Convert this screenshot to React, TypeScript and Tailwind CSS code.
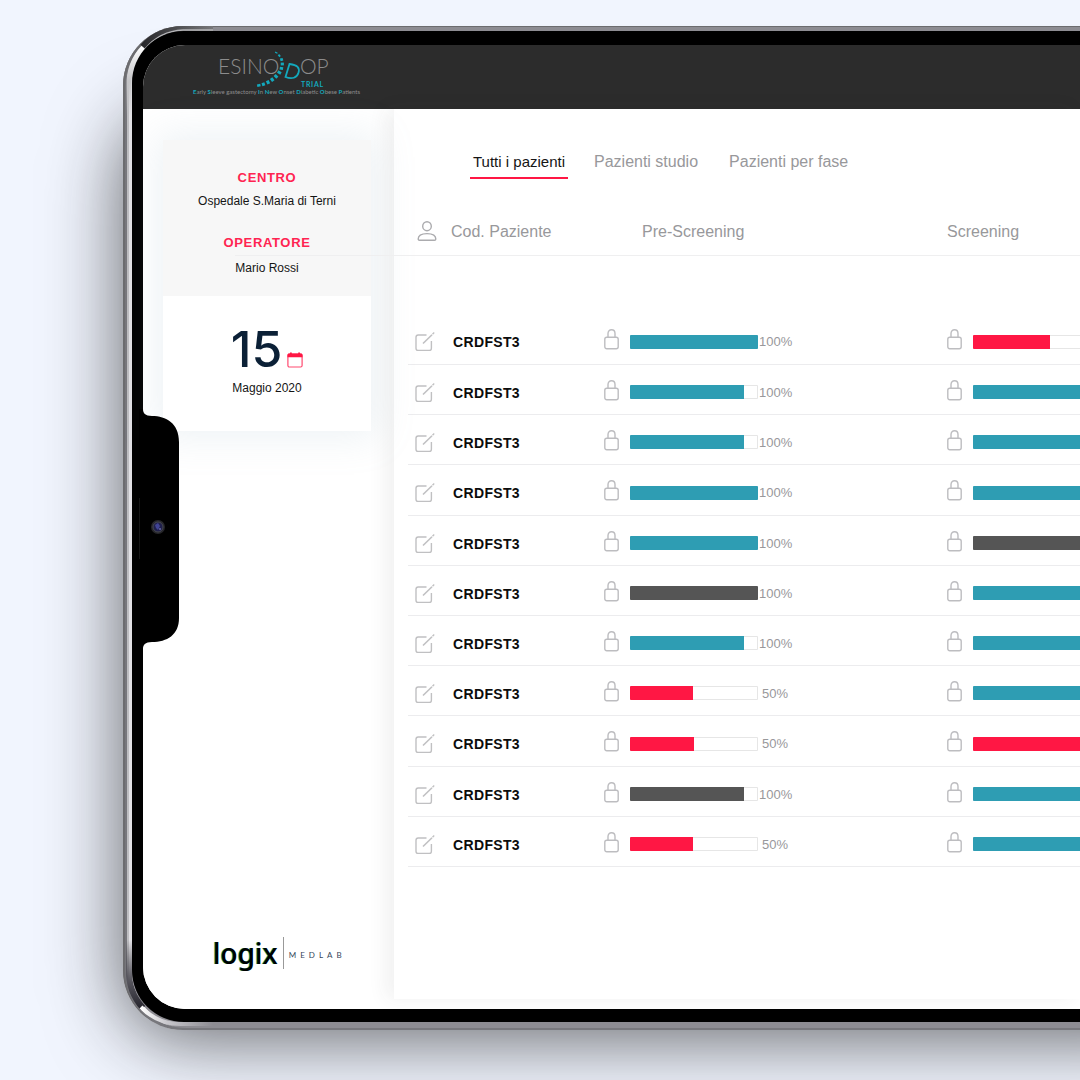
import React from "react";

type Tone = "teal" | "red" | "gray";
type Phase = { value: number; label?: string; tone: Tone };
type Patient = { code: string; pre: Phase; screening: Phase };

const tones: Record<Tone, string> = {
  teal: "bg-[#2e9db3]",
  red: "bg-[#ff1744]",
  gray: "bg-[#555555]",
};

const phase = (value: number, tone: Tone, label?: string): Phase => ({ value, tone, label });

const patients: Patient[] = [
  { code: "CRDFST3", pre: phase(100, "teal", "100%"), screening: phase(60, "red") },
  { code: "CRDFST3", pre: phase(89, "teal", "100%"), screening: phase(100, "teal") },
  { code: "CRDFST3", pre: phase(89, "teal", "100%"), screening: phase(100, "teal") },
  { code: "CRDFST3", pre: phase(100, "teal", "100%"), screening: phase(100, "teal") },
  { code: "CRDFST3", pre: phase(100, "teal", "100%"), screening: phase(100, "gray") },
  { code: "CRDFST3", pre: phase(100, "gray", "100%"), screening: phase(100, "teal") },
  { code: "CRDFST3", pre: phase(89, "teal", "100%"), screening: phase(100, "teal") },
  { code: "CRDFST3", pre: phase(49, "red", "50%"), screening: phase(100, "teal") },
  { code: "CRDFST3", pre: phase(50, "red", "50%"), screening: phase(100, "red") },
  { code: "CRDFST3", pre: phase(89, "gray", "100%"), screening: phase(100, "teal") },
  { code: "CRDFST3", pre: phase(49, "red", "50%"), screening: phase(100, "teal") },
];

/* Beads of the logo's arc: centre x, centre y, width, height, rotation. */
const beads = [
  [20.3, 1.7, 2.6, 1.2, 25],
  [23.3, 4.6, 2.6, 1.8, 50],
  [25.6, 8.6, 2.8, 2.8, 75],
  [26.3, 13, 2.8, 3.2, 90],
  [25.4, 17.4, 2.8, 3.4, 100],
  [23.3, 21.5, 2.8, 3.8, 120],
  [20, 25.4, 3, 3.8, 135],
  [16.2, 28.6, 3, 3.8, 145],
  [12, 31.2, 3, 3.6, 155],
  [7.4, 33.2, 3, 3.2, 162],
  [2.8, 34.4, 3.4, 2.4, 168],
];

function UserIcon() {
  return (
    <svg width="20" height="21" viewBox="0 0 20 21" fill="none" stroke="#ababae" strokeWidth="1.4" aria-hidden="true">
      <ellipse cx="10" cy="5.2" rx="4.3" ry="4.5" />
      <path d="M1.2 18c0-3.600 3.200-5.400 8.800-5.400s8.800 1.800 8.800 5.400c0 .8-.5 1.200-1.300 1.200h-15c-.8 0-1.300-.4-1.300-1.200z" />
    </svg>
  );
}

function EditIcon() {
  return (
    <svg width="20" height="20" viewBox="0 0 20 20" fill="none" stroke="#c0c0c2" strokeWidth="1.4" aria-hidden="true">
      <path d="M11.500 3H3.200C1.800 3 1 3.800 1 5.200v11c0 1.400.8 2.200 2.200 2.200h11c1.400 0 2.200-.8 2.200-2.200V9" />
      <path d="M8 11.500 17 2.700" strokeWidth="1.600" />
      <path d="M17.500 2.200 19.200.6" />
    </svg>
  );
}

function LockIcon() {
  return (
    <svg width="15" height="21" viewBox="0 0 15 21" fill="none" stroke="#bdbdc0" strokeWidth="1.4" aria-hidden="true">
      <rect x=".8" y="8.2" width="13.400" height="11.600" rx="2" />
      <path d="M4 8V4.500C4 2.200 5.500.8 7.500.8S11 2.200 11 4.500V8" />
    </svg>
  );
}

function CalendarIcon() {
  return (
    <svg width="16" height="16" viewBox="0 0 16 16" fill="none" aria-hidden="true">
      <rect x=".9" y="2" width="14.200" height="13" rx="1.500" stroke="#ff4a70" strokeWidth="1.200" />
      <path d="M.5 5.200V3c0-.9.700-1.500 1.500-1.500h1V.4h1.800v1.100h6.400V.4H13v1.100h1c.9 0 1.500.6 1.500 1.500v2.200z" fill="#ff1744" />
    </svg>
  );
}

function TrialLogo() {
  return (
    <a href="#" aria-label="Esinodop Trial" className="relative block w-[163px] text-[#8c8c8c]">
      <span className="flex pt-[9px] pl-[25px] font-[Lato] text-[21px] leading-6 font-light">
        <span className="w-[82px]">ESINO</span>
        <span>OP</span>
      </span>
      <svg className="absolute top-[6px] left-[63px]" width="50" height="40" viewBox="0 0 50 40" fill="none" aria-hidden="true">
        {beads.map(([x, y, w, h, r]) => (
          <rect key={x} x={x - w / 2} y={y - h / 2} width={w} height={h} transform={`rotate(${r} ${x} ${y})`} fill="#13a9bd" />
        ))}
        <path d="M33.500 13 29.500 26c6.500 2.600 11.500.8 13-4.200S41.500 14 33.500 13z" stroke="#13a9bd" strokeWidth="1.800" />
      </svg>
      <span className="block pt-[2px] pl-[108px] font-[Lato] text-[7px] leading-2 font-bold tracking-widest text-[#13a9bd]">TRIAL</span>
      <span className="block font-[Lato] text-[6px] leading-2 whitespace-nowrap [&>b]:text-[#13a9bd]">
        <b>E</b>arly <b>S</b>leeve gastectomy <b>I</b>n <b>N</b>ew <b>O</b>nset <b>D</b>iabetic <b>O</b>bese <b>P</b>atients
      </span>
    </a>
  );
}

function LogixLogo() {
  return (
    <div className="flex items-center gap-[5px] pl-[70px]">
      <span className="font-['Noto_Sans'] text-[28px] leading-8 font-medium text-black [text-shadow:-1px_0_0_#0b8f5b]">logix</span>
      <span className="h-8 w-px bg-[#999999]" />
      <span className="pt-1 font-[Lato] text-[8px] leading-3 tracking-[4px] whitespace-nowrap text-[#34465a]">MEDLAB</span>
    </div>
  );
}

function PhaseCell({ data, name }: { data: Phase; name: string }) {
  return (
    <div className="flex items-center pt-[6px]">
      <button type="button" aria-label={`Blocca ${name}`} className="mr-[11px] shrink-0 pb-1">
        <LockIcon />
      </button>
      <div
        role="progressbar"
        aria-label={name}
        aria-valuenow={data.value}
        className="h-[14px] w-32 shrink-0 overflow-hidden rounded-[1px] bg-white shadow-[inset_0_0_0_1px_#e6e6e6]"
      >
        <div className={`h-full ${tones[data.tone]}`} style={{ width: `${data.value}%` }} />
      </div>
      {data.label && (
        <span className={`pt-px text-[13px] leading-4 text-[#98989b] ${data.label === "50%" ? "pl-1" : "pl-px"}`}>{data.label}</span>
      )}
    </div>
  );
}

function Notch() {
  return (
    <svg className="absolute top-[364px] left-[-4px] z-20" width="41" height="240" viewBox="0 0 41 240" fill="none" aria-hidden="true">
      <path d="M0 0h4c0 4 2 7 9 7 14 0 27 7 27 26v176c0 17-12 24-27 24-7 0-9 3-9 7H0z" fill="#000" />
      <path d="M.5 89v61" stroke="#151515" />
      <circle cx="19" cy="118" r="7" fill="#26262a" />
      <circle cx="19" cy="118" r="5" fill="#20204d" stroke="#45474f" />
      <path d="m16 116 3-2 2 3-2 4-2-2z" fill="#414494" />
      <circle cx="21" cy="120" r="1" fill="#6468a8" />
    </svg>
  );
}

function FrameShine() {
  return (
    <div className="absolute inset-0 overflow-hidden rounded-l-[60px]">
      <svg className="absolute top-0 left-0" width="90" height="90" viewBox="0 0 90 90" fill="none" aria-hidden="true">
        <defs>
          <linearGradient id="topEdge" gradientUnits="userSpaceOnUse" x1="20" y1="0" x2="90" y2="0">
            <stop stopColor="#28282b" />
            <stop offset="1" stopColor="#77777a" />
          </linearGradient>
          <linearGradient id="topGlow" gradientUnits="userSpaceOnUse" x1="0" y1="20" x2="0" y2="90">
            <stop stopColor="#ffffff" />
            <stop offset=".5" stopColor="#c4c4c7" />
            <stop offset="1" stopColor="#c4c4c7" stopOpacity="0" />
          </linearGradient>
        </defs>
        <path d="M6 90V60A54 54 0 0 1 21 21" stroke="url(#topGlow)" strokeWidth="5" />
        <path d="M20 21A55 55 0 0 1 60 3H90" stroke="url(#topEdge)" strokeWidth="7" />
        <path d="M22 23A53 53 0 0 1 60 4H90" stroke="#b4b4b7" strokeWidth="1.500" />
      </svg>
      <svg className="absolute bottom-0 left-0" width="90" height="90" viewBox="0 0 90 90" fill="none" aria-hidden="true">
        <defs>
          <linearGradient id="lowEdge" gradientUnits="userSpaceOnUse" x1="0" y1="0" x2="0" y2="70">
            <stop stopColor="#35343c" stopOpacity="0" />
            <stop offset=".6" stopColor="#55545c" />
            <stop offset="1" stopColor="#24232b" />
          </linearGradient>
          <linearGradient id="lowGlow" gradientUnits="userSpaceOnUse" x1="18" y1="0" x2="90" y2="0">
            <stop stopColor="#ffffff" />
            <stop offset=".35" stopColor="#c9c8cd" />
            <stop offset="1" stopColor="#8d8c92" />
          </linearGradient>
        </defs>
        <path d="M6 0V30A54 54 0 0 0 20 68" stroke="url(#lowEdge)" strokeWidth="6" />
        <path d="M18 67A55 55 0 0 0 60 84H90" stroke="url(#lowGlow)" strokeWidth="4" />
      </svg>
    </div>
  );
}

export default function App() {
  return (
    <div className="min-h-screen overflow-hidden bg-[#f1f5fe] pt-[26px] pb-[51px] pl-[123px] font-['Liberation_Sans',sans-serif]">
      <div className="relative -mr-20">
        <div className="absolute top-20 right-0 bottom-0 left-0 rounded-l-[60px] shadow-[0_8px_76px_rgba(20,20,22,0.65)]" />
        <div className="relative rounded-l-[60px] bg-[#8d8c92] pt-[5px] pr-20 pb-2 pl-[9px] shadow-[inset_2px_1px_0_#6c6c6f,inset_4px_-2px_0_#77777c,inset_6px_0_0_#bebec1,inset_9px_0_0_#e2e1e5]">
          <FrameShine />
          <div className="relative -mr-20 rounded-l-[52px] bg-black pt-[14px] pr-20 pb-[13px] pl-[11px]">
            <div className="relative rounded-l-[42px] bg-[#fcfcfc]">
              <Notch />
              <header className="h-16 rounded-tl-[42px] bg-[#2c2c2c] pl-[50px]">
                <TrialLogo />
              </header>

              <div className="flex rounded-bl-[42px] bg-white">
                <aside className="flex w-[251px] shrink-0 flex-col justify-between pt-[31px] pb-10">
                  <section className="relative z-10 ml-5 w-52 text-center text-[12px] leading-4 text-[#151515] shadow-[0_0_36px_6px_rgba(150,175,195,0.17)]">
                    <div className="bg-[#f7f7f7] px-2 pt-[30px] pb-5">
                      <h2 className="text-[13px] font-bold tracking-wider text-[#ff2451]">CENTRO</h2>
                      <p className="mt-[7px]">Ospedale S.Maria di Terni</p>
                      <h2 className="mt-[26px] text-[13px] font-bold tracking-wider text-[#ff2451]">OPERATORE</h2>
                      <p className="mt-[9px]">Mario Rossi</p>
                    </div>
                    <div className="bg-white pt-7 pb-[35px]">
                      <div className="flex items-end justify-center gap-[5px]">
                        <span className="font-[Inter] text-[50px] leading-[51px] font-medium text-[#0b2036]">15</span>
                        <button type="button" aria-label="Apri calendario" className="mb-[7px]">
                          <CalendarIcon />
                        </button>
                      </div>
                      <p className="mt-[5px]">Maggio 2020</p>
                    </div>
                  </section>
                  <LogixLogo />
                </aside>

                <main className="relative mb-[10px] min-w-0 flex-1 bg-white pb-[132px] pl-[14px] shadow-[-8px_0_18px_rgba(60,60,60,0.07)]">
                  <nav aria-label="Pazienti" className="flex items-start gap-[26px] pt-[43px] pl-[62px] text-[16px] leading-5 text-[#98989b]">
                    <a href="#tutti" aria-current="page" className="border-b-2 border-[#ff1744] px-[3px] pb-[5px] text-[15px] text-[#151515]">
                      Tutti i pazienti
                    </a>
                    <a href="#studio">Pazienti studio</a>
                    <a href="#fase" className="ml-[5px]">Pazienti per fase</a>
                  </nav>

                  <table className="mt-7 w-full table-fixed text-left">
                    <thead className="text-[16px] leading-5 text-[#98989b]">
                      <tr className="relative h-[49px]">
                        <th scope="col" className="w-[196px] p-0 font-normal">
                          <span className="absolute right-0 bottom-0 -left-[173px] z-20 h-px bg-[#efeff0]" />
                          <span className="flex items-center gap-[14px] pl-[9px]">
                            <UserIcon />
                            Cod. Paziente
                          </span>
                        </th>
                        <th scope="col" className="w-[343px] p-0 pl-[38px] font-normal">Pre-Screening</th>
                        <th scope="col" className="p-0 font-normal">Screening</th>
                      </tr>
                    </thead>
                    <tbody className="before:block before:h-[58px]">
                      {patients.map((p, i) => (
                        <tr key={i} className="h-[50px] border-b border-[#ececee] nth-[5n+4]:h-[51px]">
                          <td className="p-0">
                            <div className="flex items-center gap-[18px] pt-[7px] pl-[7px]">
                              <button type="button" aria-label={`Modifica ${p.code}`}>
                                <EditIcon />
                              </button>
                              <span className="text-[14px] leading-4 font-bold tracking-wide text-[#0c0c0c]">{p.code}</span>
                            </div>
                          </td>
                          <td className="p-0">
                            <PhaseCell data={p.pre} name="Pre-Screening" />
                          </td>
                          <td className="p-0">
                            <PhaseCell data={p.screening} name="Screening" />
                          </td>
                        </tr>
                      ))}
                    </tbody>
                  </table>
                </main>
              </div>
            </div>
          </div>
        </div>
      </div>
    </div>
  );
}
